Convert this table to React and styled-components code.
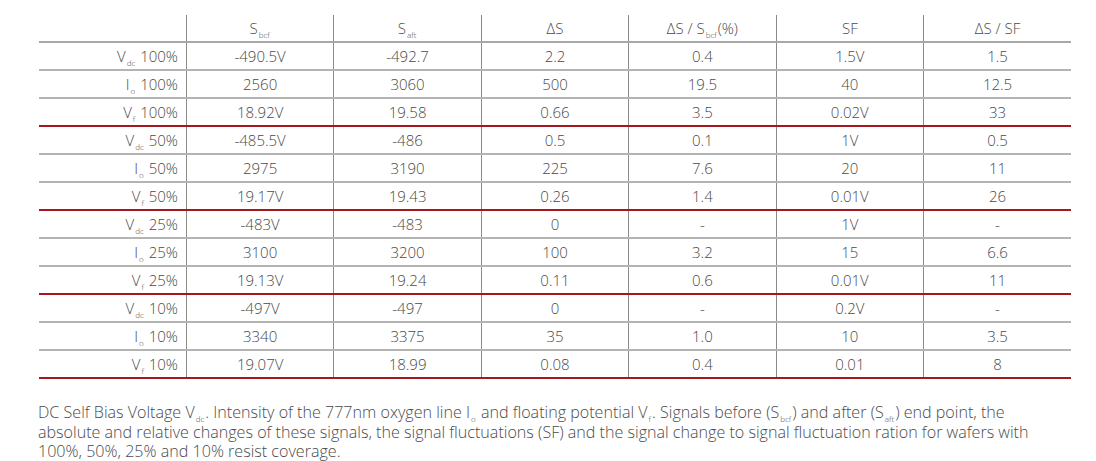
import styled, { createGlobalStyle } from "styled-components";

const GlobalStyle = createGlobalStyle`
  body {
    margin: 0;
    background: #ffffff;
    font-family: "Open Sans", "Liberation Sans", sans-serif;
    font-weight: 300;
    color: #4a4a4a;
  }
`;

const Page = styled.div`
  padding: 15px 25px 0 39px;
  width: 1032px;
`;

const Table = styled.table`
  width: 1032px;
  border-collapse: collapse;
  table-layout: fixed;
  font-size: 15px;
`;

const Th = styled.th`
  font-weight: 300;
  height: 26px;
  padding: 0;
  text-align: center;
  border-left: ${(p) => (p.first ? "none" : "1px solid #8a8a8a")};
  border-bottom: 2px solid #a8a8a8;
  vertical-align: middle;
`;

const Row = styled.tr`
  border-bottom: ${(p) => (p.groupEnd ? "2px solid #a5161d" : "2px solid #b4b4b4")};
`;

const Td = styled.td`
  height: 26px;
  padding: 0 ${(p) => (p.label ? "8px" : "0")} 0 0;
  text-align: ${(p) => (p.label ? "right" : "center")};
  border-left: ${(p) => (p.label ? "none" : "1px solid #8a8a8a")};
  vertical-align: middle;
  white-space: nowrap;
`;

const Sub = styled.sub`
  font-size: 8px;
  vertical-align: -4px;
  line-height: 0;
  margin: 0 1px;
`;

const Caption = styled.p`
  margin: 24px 0 0 -1px;
  width: 1020px;
  font-size: 16.1px;
  line-height: 19.5px;
  color: #4a4a4a;
`;

const Sig = ({ s, sub }) => (
  <>
    {s}
    <Sub>{sub}</Sub>
  </>
);

const groups = [
  {
    pct: "100%",
    rows: [
      ["dc", "-490.5V", "-492.7", "2.2", "0.4", "1.5V", "1.5"],
      ["o", "2560", "3060", "500", "19.5", "40", "12.5"],
      ["f", "18.92V", "19.58", "0.66", "3.5", "0.02V", "33"],
    ],
  },
  {
    pct: "50%",
    rows: [
      ["dc", "-485.5V", "-486", "0.5", "0.1", "1V", "0.5"],
      ["o", "2975", "3190", "225", "7.6", "20", "11"],
      ["f", "19.17V", "19.43", "0.26", "1.4", "0.01V", "26"],
    ],
  },
  {
    pct: "25%",
    rows: [
      ["dc", "-483V", "-483", "0", "-", "1V", "-"],
      ["o", "3100", "3200", "100", "3.2", "15", "6.6"],
      ["f", "19.13V", "19.24", "0.11", "0.6", "0.01V", "11"],
    ],
  },
  {
    pct: "10%",
    rows: [
      ["dc", "-497V", "-497", "0", "-", "0.2V", "-"],
      ["o", "3340", "3375", "35", "1.0", "10", "3.5"],
      ["f", "19.07V", "18.99", "0.08", "0.4", "0.01", "8"],
    ],
  },
];

const letter = { dc: "V", o: "I", f: "V" };

export default function App() {
  return (
    <Page>
      <GlobalStyle />
      <Table>
        <thead>
          <tr>
            <Th first />
            <Th>
              <Sig s="S" sub="bcf" />
            </Th>
            <Th>
              <Sig s="S" sub="aft" />
            </Th>
            <Th>ΔS</Th>
            <Th>
              ΔS / <Sig s="S" sub="bcf" />
              (%)
            </Th>
            <Th>SF</Th>
            <Th>ΔS / SF</Th>
          </tr>
        </thead>
        <tbody>
          {groups.map((g) =>
            g.rows.map((r, i) => (
              <Row key={g.pct + r[0]} groupEnd={i === 2}>
                <Td label>
                  <Sig s={letter[r[0]]} sub={r[0]} /> {g.pct}
                </Td>
                {r.slice(1).map((v, j) => (
                  <Td key={j}>{v}</Td>
                ))}
              </Row>
            ))
          )}
        </tbody>
      </Table>
      <Caption>
        DC Self Bias Voltage <Sig s="V" sub="dc" />. Intensity of the 777nm oxygen line{" "}
        <Sig s="I" sub="o" /> and floating potential <Sig s="V" sub="f" />. Signals before (
        <Sig s="S" sub="bcf" />) and after (<Sig s="S" sub="aft" />) end point, the absolute and
        relative changes of these signals, the signal fluctuations (SF) and the signal change to
        signal fluctuation ration for wafers with 100%, 50%, 25% and 10% resist coverage.
      </Caption>
    </Page>
  );
}
